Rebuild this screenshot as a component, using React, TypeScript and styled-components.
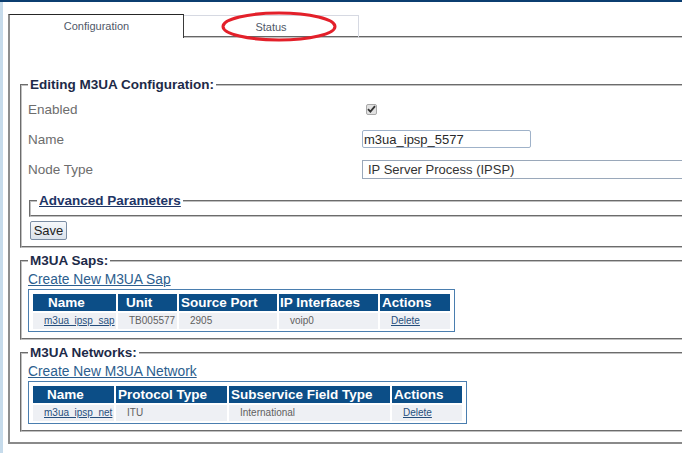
import React from 'react';
import styled, { createGlobalStyle } from 'styled-components';

const GlobalStyle = createGlobalStyle`
  html, body {
    margin: 0;
    padding: 0;
    background: #ffffff;
    overflow: hidden;
  }
  body {
    font-family: "Liberation Sans", Arial, sans-serif;
  }
`;

type Col = { title: string; width: number; pad: number };

const sapCols: Col[] = [
  { title: 'Name', width: 83, pad: 15 },
  { title: 'Unit', width: 59, pad: 8 },
  { title: 'Source Port', width: 98, pad: 2 },
  { title: 'IP Interfaces', width: 99, pad: 1 },
  { title: 'Actions', width: 70, pad: 2 },
];

const netCols: Col[] = [
  { title: 'Name', width: 81, pad: 14 },
  { title: 'Protocol Type', width: 111, pad: 2 },
  { title: 'Subservice Field Type', width: 161, pad: 2 },
  { title: 'Actions', width: 70, pad: 2 },
];

const DataTable = ({ cols, row }: { cols: Col[]; row: string[] }) => (
  <TableBox>
    <Table>
      <thead>
        <tr>
          {cols.map((c) => (
            <Th key={c.title} $pad={c.pad} style={{ width: c.width }}>
              {c.title}
            </Th>
          ))}
        </tr>
      </thead>
      <tbody>
        <tr>
          {row.map((cell, i) => (
            <Td key={i}>
              {i === 0 || i === row.length - 1 ? <CellLink href="#">{cell}</CellLink> : cell}
            </Td>
          ))}
        </tr>
      </tbody>
    </Table>
  </TableBox>
);

const App = () => {
  return (
    <>
      <GlobalStyle />
      <Page>
        <Shell>
          <Frame>
            <TabBar>
              <Tab $active>Configuration</Tab>
              <Tab>
                Status
                <Circle width="116" height="31" viewBox="0 0 116 31">
                  <ellipse cx="58" cy="15.5" rx="56" ry="13.5" fill="none" stroke="#e3202a" strokeWidth="3" />
                </Circle>
              </Tab>
              <TabFiller />
            </TabBar>

            <Panel>
              <Group>
                <Legend>Editing M3UA Configuration:</Legend>
                <FormRow>
                  <Label>Enabled</Label>
                  <Check>
                    <svg width="9" height="8" viewBox="0 0 9 8">
                      <path d="M1 4.2 L3.4 6.6 L8 1.2" fill="none" stroke="#333" strokeWidth="1.8" />
                    </svg>
                  </Check>
                </FormRow>
                <FormRow>
                  <Label>Name</Label>
                  <TextInput defaultValue="m3ua_ipsp_5577" />
                </FormRow>
                <FormRow>
                  <Label>Node Type</Label>
                  <Select defaultValue="ipsp">
                    <option value="ipsp">IP Server Process (IPSP)</option>
                  </Select>
                </FormRow>
                <SubGroup>
                  <Legend $link>Advanced Parameters</Legend>
                </SubGroup>
                <SaveButton>Save</SaveButton>
              </Group>

              <Group $spaced>
                <Legend>M3UA Saps:</Legend>
                <CreateLink href="#">Create New M3UA Sap</CreateLink>
                <DataTable cols={sapCols} row={['m3ua_ipsp_sap', 'TB005577', '2905', 'voip0', 'Delete']} />
              </Group>

              <Group $spaced>
                <Legend>M3UA Networks:</Legend>
                <CreateLink href="#">Create New M3UA Network</CreateLink>
                <DataTable cols={netCols} row={['m3ua_ipsp_net', 'ITU', 'International', 'Delete']} />
              </Group>
            </Panel>
          </Frame>
        </Shell>
      </Page>
    </>
  );
};

export default App;

const Page = styled.div`
  border-top: 2px solid #0b3d70;
`;

const Shell = styled.div`
  border-left: 3px solid #c6dbeb;
  padding: 12px 0 0 5px;
  min-height: 451px;
  box-sizing: border-box;
`;

const Frame = styled.div`
  width: 780px;
`;

const TabBar = styled.div`
  display: flex;
  height: 24px;
`;

const Tab = styled.div<{ $active?: boolean }>`
  position: relative;
  box-sizing: border-box;
  width: ${(p) => (p.$active ? '176px' : '175px')};
  display: flex;
  align-items: center;
  justify-content: center;
  font-size: 11px;
  color: #4f5868;
  background: #ffffff;
  ${(p) =>
    p.$active
      ? `
    border-top: 1px solid #262626;
    border-left: 2px solid #8e8e8e;
    border-right: 1px solid #3a3a3a;
    padding-bottom: 2px;
  `
      : `
    margin-top: 1px;
    border-top: 1px solid #d6d9e2;
    border-right: 1px solid #d6d9e2;
    border-bottom: 1px solid #c4c4c4;
    box-shadow: inset 0 -1px 0 #666666;
  `}
`;

const TabFiller = styled.div`
  flex: 1;
  border-bottom: 1px solid #c4c4c4;
  box-shadow: inset 0 -1px 0 #666666;
`;

const Circle = styled.svg`
  position: absolute;
  left: 37px;
  top: -5px;
  overflow: visible;
  pointer-events: none;
`;

const Panel = styled.div`
  border-left: 2px solid #8e8e8e;
  border-bottom: 2px solid #8a8a8a;
  padding: 39px 0 10px 10px;
`;

const Group = styled.fieldset<{ $spaced?: boolean }>`
  margin: ${(p) => (p.$spaced ? '5px' : '0')} 0 0 0;
  padding: 0 6px 6px 6px;
  border: 2px groove #c0c0c0;
  min-width: 0;
`;

const SubGroup = styled.fieldset`
  margin: 9px 0 0 1px;
  padding: 0 6px 6px 6px;
  border: 2px groove #c0c0c0;
  min-width: 0;
`;

const Legend = styled.legend<{ $link?: boolean }>`
  padding: 0 2px;
  font-size: 13.5px;
  font-weight: bold;
  line-height: 16px;
  color: ${(p) => (p.$link ? '#1e3566' : '#1d2a48')};
  text-decoration: ${(p) => (p.$link ? 'underline' : 'none')};
  cursor: ${(p) => (p.$link ? 'pointer' : 'default')};
`;

const FormRow = styled.div`
  display: grid;
  grid-template-columns: 334px 1fr;
  align-items: center;
  height: 30px;
  &:first-of-type {
    margin-top: 1px;
  }
`;

const Label = styled.span`
  font-size: 13.5px;
  color: #6d6d6d;
`;

const Check = styled.span`
  box-sizing: border-box;
  width: 11px;
  height: 11px;
  margin-left: 4px;
  display: flex;
  align-items: center;
  justify-content: center;
  background: #e2e2e2;
  border: 1px solid #a9a9a9;
  border-radius: 2px;
`;

const TextInput = styled.input`
  box-sizing: border-box;
  width: 169px;
  height: 18px;
  padding: 0 1px;
  border: 1px solid #9fb2c9;
  border-radius: 2px;
  font-family: "Liberation Sans", Arial, sans-serif;
  font-size: 13px;
  color: #2a2a2a;
  outline: none;
`;

const Select = styled.select`
  box-sizing: border-box;
  width: 380px;
  height: 19px;
  padding: 0 0 0 5px;
  border: 1px solid #9aa8ba;
  border-radius: 0;
  background: #ffffff;
  appearance: none;
  font-family: "Liberation Sans", Arial, sans-serif;
  font-size: 13px;
  color: #333333;
  outline: none;
`;

const SaveButton = styled.button`
  display: block;
  box-sizing: border-box;
  margin: 4px 0 0 2px;
  width: 37px;
  height: 19px;
  padding: 0;
  border: 1px solid #7b8da3;
  border-radius: 2px;
  background: linear-gradient(#f6f8fb, #dbe2ea);
  font-family: "Liberation Sans", Arial, sans-serif;
  font-size: 13px;
  color: #222222;
`;

const CreateLink = styled.a`
  display: block;
  width: max-content;
  margin-top: 3px;
  font-size: 13.8px;
  line-height: 16px;
  color: #2c5e8e;
  text-decoration: underline;
`;

const TableBox = styled.div`
  display: block;
  width: max-content;
  margin-top: 1px;
  padding: 4px 2px 0 2px;
  border: 1px solid #4a7eaf;
`;

const Table = styled.table`
  border-collapse: separate;
  border-spacing: 2px;
  margin: -2px 0 0 0;
  table-layout: fixed;
`;

const Th = styled.th<{ $pad: number }>`
  box-sizing: border-box;
  height: 17px;
  padding: 0 0 0 ${(p) => p.$pad}px;
  background: #0c4e87;
  color: #ffffff;
  font-size: 13.5px;
  font-weight: bold;
  line-height: 17px;
  text-align: left;
  white-space: nowrap;
`;

const Td = styled.td`
  height: 16px;
  padding: 0 0 0 11px;
  background: #eef0f4;
  color: #5f5f5f;
  font-size: 10px;
  line-height: 16px;
  white-space: nowrap;
`;

const CellLink = styled.a`
  color: #264f7d;
  text-decoration: underline;
`;
